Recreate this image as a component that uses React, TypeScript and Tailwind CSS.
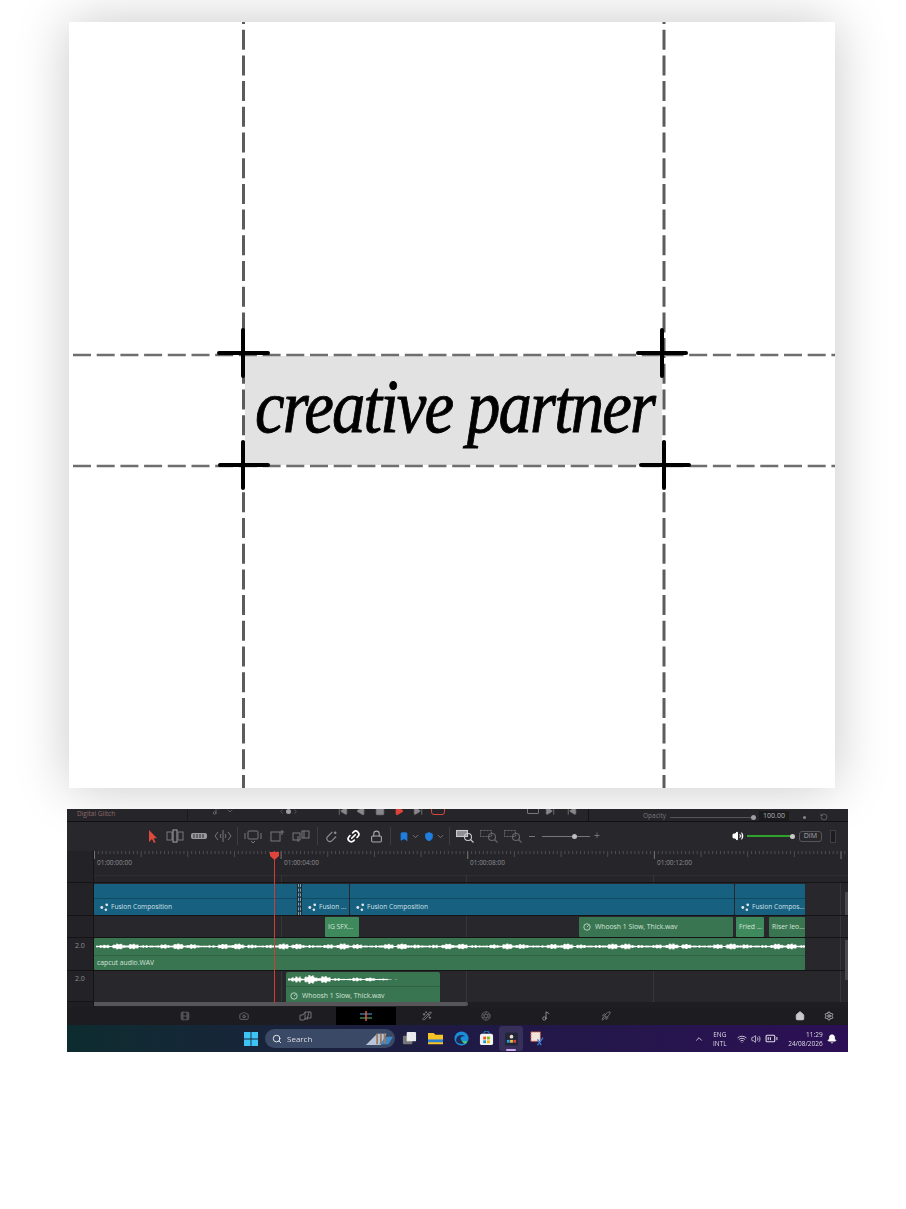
import { useMemo } from "react";
import {
  Aperture,
  BatteryMedium,
  Bell,
  Bookmark,
  Camera,
  ChevronDown,
  ChevronLeft,
  ChevronRight,
  ChevronUp,
  Film,
  Home,
  Link2,
  Lock,
  Music2,
  Play,
  Rocket,
  RotateCcw,
  Search,
  Settings,
  Shield,
  SkipBack,
  SkipForward,
  Square,
  Volume2,
  Wand2,
  Wifi,
} from "lucide-react";

const GUIDES_V = [243.5, 664];
const GUIDES_H = [355, 466];
const CROSSES = [
  { x: 243, y: 353, x1: 219, x2: 268 },
  { x: 662, y: 353, x1: 638, x2: 686 },
  { x: 243, y: 465, x1: 220, x2: 268 },
  { x: 664, y: 465, x1: 641, x2: 689 },
];

function Guides() {
  return (
    <svg className="absolute inset-0 w-full h-full" viewBox="69 22 766 766">
      <rect x="245" y="356" width="417" height="109" fill="#e2e2e2" />
      {GUIDES_V.map((x) => (
        <line key={x} x1={x} x2={x} y1="4" y2="788" stroke="#5c5c5c" strokeWidth="3" strokeDasharray="20 5.7" />
      ))}
      {GUIDES_H.map((y) => (
        <line key={y} x1="73" x2="835" y1={y} y2={y} stroke="#6e6e6e" strokeWidth="2.6" strokeDasharray="18 5.7" />
      ))}
      {CROSSES.map((c) => (
        <g key={c.x1 + "-" + c.y} stroke="#000" strokeWidth="4" strokeLinecap="round">
          <line x1={c.x1} x2={c.x2} y1={c.y} y2={c.y} />
          <line x1={c.x} x2={c.x} y1={c.y - 23} y2={c.y + 23} />
        </g>
      ))}
    </svg>
  );
}

function Canvas() {
  return (
    <div className="relative ml-[69px] w-[766px] h-[766px] bg-white shadow-[0_0_50px_rgba(0,0,0,0.22)] overflow-hidden">
      <div className="absolute inset-0 blur-[0.6px]">
        <Guides />
        <div className="absolute left-[186px] top-[336px] origin-left scale-x-[0.878] font-['Liberation_Serif',serif] italic text-[76px] leading-[96px] tracking-[-2.15px] text-black whitespace-nowrap [-webkit-text-stroke:0.9px_black]">
          creative partner
        </div>
      </div>
    </div>
  );
}

function Sep() {
  return <div className="w-px h-[18px] bg-[#3c3c41]" />;
}

function TrimIcon({ variant }: { variant: number }) {
  return (
    <svg viewBox="0 0 18 16" className="w-[18px] h-[16px] shrink-0" fill="none" stroke="#77777c" strokeWidth="1">
      {variant === 0 && (
        <>
          <rect x="1" y="4" width="5" height="8" />
          <rect x="7" y="2" width="4" height="12" stroke="#a5a5a8" />
          <rect x="12" y="4" width="5" height="8" />
        </>
      )}
      {variant === 1 && (
        <>
          <rect x="1" y="5" width="16" height="6" rx="2" fill="#9a9a9e" stroke="none" />
          <path d="M4 6v4M7 6v4M10 6v4M13 6v4" stroke="#2a2a2e" />
        </>
      )}
      {variant === 2 && <path d="M4 4 1 8l3 4M14 4l3 4-3 4M9 2v12M7 6 6 8l1 2M11 6l1 2-1 2" />}
      {variant === 3 && (
        <>
          <rect x="4" y="3" width="10" height="8" rx="1" />
          <path d="M1 5v6M17 5v6M7 13l2 2 2-2" />
        </>
      )}
      {variant === 4 && (
        <>
          <rect x="3" y="4" width="9" height="9" />
          <path d="M14 2v5M12 4h4" />
        </>
      )}
      {variant === 5 && (
        <>
          <rect x="1" y="5" width="7" height="7" />
          <rect x="10" y="3" width="7" height="7" />
          <path d="M6 14V8M12 10V3" />
        </>
      )}
    </svg>
  );
}

function ZoomIcon({ on }: { on?: boolean }) {
  const stroke = on ? "#c9c9cc" : "#67676c";
  return (
    <svg viewBox="0 0 18 14" className="w-[18px] h-[14px]" fill="none" stroke={stroke} strokeWidth="1.1">
      <rect
        x="0.5"
        y="1.5"
        width="11"
        height="6"
        fill={on ? "#8f8f93" : "none"}
        strokeDasharray={on ? undefined : "2 1"}
      />
      <circle cx="12" cy="8" r="3.5" />
      <path d="m14.5 10.5 3 3" />
    </svg>
  );
}

function Toolbar() {
  return (
    <div className="flex items-center h-[30px] bg-[#28282c] pl-[77px] pb-[1px] border-t border-[#111114]">
      <svg viewBox="0 0 16 16" className="w-[16px] h-[16px] shrink-0">
        <path d="M5 2v12l3-3 2 4 1.6-.8-2-3.9H13z" fill="#dd4a3c" />
      </svg>
      <div className="flex items-center gap-[6px] ml-[6px]">
        <TrimIcon variant={0} />
        <TrimIcon variant={1} />
        <TrimIcon variant={2} />
      </div>
      <div className="ml-[5px]"><Sep /></div>
      <div className="flex items-center gap-[6px] ml-[6px]">
        <TrimIcon variant={3} />
        <TrimIcon variant={4} />
        <TrimIcon variant={5} />
      </div>
      <div className="ml-[7px]"><Sep /></div>
      {/* snapping */}
      <svg viewBox="0 0 14 14" className="w-[13px] h-[13px] ml-[7px]" fill="none" stroke="#8d8d91" strokeWidth="1.2">
        <path d="M8 2 3 7a3 3 0 0 0 4.5 4.5L12 7" />
        <circle cx="11" cy="3" r="0.8" fill="#8d8d91" />
      </svg>
      <Link2 className="w-[15px] h-[15px] ml-[8px] text-white -rotate-45" strokeWidth={2.6} />
      <Lock className="w-[13px] h-[13px] ml-[9px] text-[#a9a9ad]" />
      <div className="ml-[7px]"><Sep /></div>
      <Bookmark className="w-[10px] h-[11px] ml-[8px] text-[#1f7fe0] fill-[#1f7fe0]" />
      <ChevronDown className="w-[9px] h-[9px] ml-[2px] text-[#8a8a8e]" />
      <Shield className="w-[10px] h-[11px] ml-[4px] text-[#1f7fe0] fill-[#1f7fe0]" />
      <ChevronDown className="w-[9px] h-[9px] ml-[2px] text-[#8a8a8e]" />
      <div className="ml-[4px]"><Sep /></div>
      <div className="flex items-center gap-[6px] ml-[6px]">
        <ZoomIcon on />
        <ZoomIcon />
        <ZoomIcon />
      </div>
      <span className="ml-[7px] w-[6px] h-px bg-[#77777b]" />
      <div className="relative ml-[7px] w-[48px] h-px bg-[#77777b]">
        <span className="absolute left-[30px] -top-[2px] w-[5px] h-[5px] rounded-full bg-[#bdbdc0]" />
      </div>
      <span className="ml-[4px] text-[10px] leading-none text-[#77777b] font-['Liberation_Sans',sans-serif]">+</span>
      <Volume2 className="w-[12px] h-[12px] ml-[132px] text-white fill-white" />
      <div className="relative ml-[3px] w-[46px] h-[2px] bg-[#30a02f]">
        <span className="absolute -right-[2px] -top-[1.5px] w-[5px] h-[5px] rounded-full bg-[#c8c8c8]" />
      </div>
      <div className="ml-[6px] w-[23px] h-[11px] rounded-[3px] border border-[#55555a] flex items-center justify-center text-[7px] text-[#a8a8ac] font-['Open_Sans',sans-serif]">
        DIM
      </div>
      <div className="ml-[8px] w-[6px] h-[13px] border border-[#3f3f44] bg-[#1d1d20]" />
    </div>
  );
}

function Ruler() {
  const ticks = useMemo(() => Array.from({ length: 194 }, (_, i) => i), []);
  return (
    <div className="flex h-[32px] bg-[#26262a]">
      <div className="w-[27px] bg-[#232327] border-r border-[#141416] border-b" />
      <div className="relative flex-1 border-b border-[#141416]">
        <svg className="absolute inset-0 w-full h-[9px]" viewBox="0 0 754 9">
          {ticks.map((i) => (
            <line
              key={i}
              x1={i * 3.888 + 0.5}
              x2={i * 3.888 + 0.5}
              y1="0"
              y2={i % 48 === 0 ? 8 : i % 12 === 0 ? 6 : 3}
              stroke={i % 48 === 0 ? "#77777b" : "#4e4e53"}
            />
          ))}
        </svg>
        <div className="flex pt-[7px] pl-[3px] text-[6.5px] text-[#8e8e92] font-['Open_Sans',sans-serif]">
          <span className="w-[187px]">01:00:00:00</span>
          <span className="w-[186px]">01:00:04:00</span>
          <span className="w-[187px]">01:00:08:00</span>
          <span>01:00:12:00</span>
        </div>
        <div className="absolute left-0 right-0 top-[24px] h-px bg-[#2e2e33]" />
        <div className="absolute left-[187px] top-[24px] bottom-0 w-px bg-[#333338]" />
        <div className="absolute left-[372px] top-[24px] bottom-0 w-px bg-[#333338]" />
        <div className="absolute left-[559px] top-[24px] bottom-0 w-px bg-[#333338]" />
      </div>
    </div>
  );
}

function FusionIcon() {
  return (
    <svg viewBox="0 0 10 10" className="w-[9px] h-[9px] shrink-0 fill-[#dfe9ee]">
      <circle cx="2" cy="5" r="1.6" />
      <circle cx="7.5" cy="2" r="1.5" />
      <circle cx="6.5" cy="7.5" r="1.4" />
    </svg>
  );
}

function BlueClip({ label, className }: { label?: string; className: string }) {
  return (
    <div className={`h-[31px] bg-[#17607f] rounded-[1px] flex flex-col overflow-hidden ${className}`}>
      <div className="h-[15px] border-b border-[#0f4a63]" />
      {label && (
        <div className="flex-1 flex items-center gap-[2px] pl-[6px] text-[6.6px] text-[#cfe0e7] whitespace-nowrap font-['Open_Sans',sans-serif]">
          <FusionIcon />
          {label}
        </div>
      )}
    </div>
  );
}

function GreenClip({ label, className, speed }: { label: string; className: string; speed?: boolean }) {
  return (
    <div className={`h-[20px] rounded-[1px] flex items-center gap-[4px] pl-[3px] text-[6.8px] text-[#d3e4d9] whitespace-nowrap overflow-hidden font-['Open_Sans',sans-serif] ${className}`}>
      {speed && (
        <svg viewBox="0 0 10 10" className="w-[8px] h-[8px] shrink-0 ml-[1px]" fill="none" stroke="#d3e4d9">
          <circle cx="5" cy="5" r="4" />
          <path d="m5 5 2-2" />
        </svg>
      )}
      {label}
    </div>
  );
}

// fake waveform, same bars every render
function Waveform({ width, height, amp, fade }: { width: number; height: number; amp: number; fade?: boolean }) {
  const path = useMemo(() => {
    let d = `M0 ${height / 2}H${fade ? width * 0.8 : width}`;
    for (let x = 0; x < width; x += 1) {
      const n = Math.abs(Math.sin(x * 0.21) * Math.sin(x * 0.057) + 0.25 * Math.sin(x * 1.7));
      const env = fade ? Math.max(0, 1 - x / width) : 1;
      const h = (0.4 + n * amp) * env;
      d += `M${x} ${(height / 2 - h).toFixed(1)}V${(height / 2 + h).toFixed(1)}`;
    }
    return d;
  }, [width, height, amp, fade]);
  return (
    <svg viewBox={`0 0 ${width} ${height}`} className="block" width={width} height={height}>
      <path d={path} stroke="#ffffff" strokeWidth="1.1" fill="none" />
    </svg>
  );
}

function TrackHead({ label, className }: { label?: string; className: string }) {
  return (
    <div className={`bg-[#232327] border-b border-[#141416] text-[7px] text-[#8c8c90] pl-[8px] pt-[3px] font-['Open_Sans',sans-serif] ${className}`}>
      {label}
    </div>
  );
}

function Timeline() {
  return (
    <div className="relative bg-[#28282c]">
      <Ruler />
      <div className="flex">
        <div className="w-[27px] flex flex-col border-r border-[#141416] shrink-0">
          <TrackHead className="h-[33px]" />
          <TrackHead className="h-[22px]" />
          <TrackHead label="2.0" className="h-[33px]" />
          <TrackHead label="2.0" className="h-[31px]" />
          <div className="h-[5px] bg-[#1f1f23]" />
        </div>
        <div className="relative flex-1 flex flex-col">
          {/* grid lines under the clips */}
          <div className="absolute left-[187px] top-0 bottom-[5px] w-px bg-[#36363b]" />
          <div className="absolute left-[372px] top-0 bottom-[5px] w-px bg-[#36363b]" />
          <div className="absolute left-[559px] top-0 bottom-[5px] w-px bg-[#36363b]" />
          <div className="absolute left-[746px] top-0 bottom-[5px] w-px bg-[#36363b]" />
          <div className="relative h-[33px] flex pt-[1px] border-b border-[#141416]">
            <BlueClip label="Fusion Composition" className="w-[203px]" />
            <div className="ml-[1px] w-[3px] h-[31px] bg-[#123f54] border-x border-dashed border-[#7f9fae]" />
            <BlueClip label="Fusion ..." className="ml-[1px] w-[47px]" />
            <BlueClip label="Fusion Composition" className="ml-[1px] w-[384px]" />
            <BlueClip label="Fusion Compos..." className="ml-[1px] w-[70px]" />
          </div>
          <div className="relative h-[22px] flex pt-[1px] border-b border-[#141416]">
            <GreenClip label="IG SFX..." className="ml-[231px] w-[34px] bg-[#3f8a5c]" />
            <GreenClip speed label="Whoosh 1  Slow, Thick.wav" className="ml-[220px] w-[154px] bg-[#3a7551]" />
            <GreenClip label="Fried ..." className="ml-[3px] w-[28px] bg-[#3f8a5c]" />
            <GreenClip label="Riser leo..." className="ml-[5px] w-[36px] bg-[#3a7551]" />
          </div>
          <div className="relative h-[33px] border-b border-[#141416]">
            <div className="w-[711px] h-[32px] bg-[#3a7551] flex flex-col rounded-[1px]">
              <div className="h-[18px] border-b border-[#2f6344] flex items-center pl-[2px]">
                <Waveform width={709} height={9} amp={2.2} />
              </div>
              <div className="flex-1 flex items-center pl-[3px] text-[6.8px] text-[#d3e4d9] font-['Open_Sans',sans-serif]">
                capcut audio.WAV
              </div>
            </div>
          </div>
          <div className="relative h-[31px] pt-[1px] overflow-hidden">
            <div className="ml-[192px] w-[154px] h-[30px] bg-[#3a7551] rounded-t-[2px] flex flex-col">
              <div className="h-[15px] border-b border-[#2f6344] flex items-center pl-[2px]">
                <Waveform width={120} height={11} amp={4.5} fade />
              </div>
              <div className="flex items-center gap-[4px] pl-[4px] pt-[4px] text-[6.8px] text-[#d3e4d9] font-['Open_Sans',sans-serif]">
                <svg viewBox="0 0 10 10" className="w-[8px] h-[8px]" fill="none" stroke="#d3e4d9">
                  <circle cx="5" cy="5" r="4" />
                  <path d="m5 5 2-2" />
                </svg>
                Whoosh 1  Slow, Thick.wav
              </div>
            </div>
          </div>
          <div className="relative h-[5px] bg-[#1f1f23] pb-[1px]">
            <div className="w-[374px] h-[4px] bg-[#55555a] rounded-r-[2px]" />
          </div>
        </div>
      </div>
      {/* vertical scroll thumbs */}
      <div className="absolute right-0 top-[41px] w-[3px] h-[23px] bg-[#4a4a4f]" />
      <div className="absolute right-0 top-[89px] w-[3px] h-[40px] bg-[#4a4a4f]" />
      {/* playhead */}
      <div className="absolute left-[207px] top-0 bottom-[4px] w-px bg-[#d13b30]" />
      <div className="absolute left-[203px] top-[1px] w-[9px] h-[8px] bg-[#e0443a] [clip-path:polygon(0_0,100%_0,100%_50%,50%_100%,0_50%)]" />
    </div>
  );
}

function PageNav() {
  const cls = "w-[10px] h-[10px]";
  return (
    <div className="h-[18px] bg-[#1d1d21] flex items-center">
      <Film className={`${cls} ml-[113px] text-[#636368]`} />
      <Camera className={`${cls} ml-[49px] text-[#717176]`} />
      <svg viewBox="0 0 14 10" className="w-[14px] h-[10px] ml-[50px]" fill="none" stroke="#717176">
        <path d="M1 4h3l2-3h6v6H7l-2 2H1zM6 1v8M10 1 8 9" />
      </svg>
      <div className="ml-[23px] w-[60px] h-[18px] bg-black flex items-center justify-center">
        <svg viewBox="0 0 14 10" className="w-[14px] h-[10px]">
          <path d="M1 3h12" stroke="#5aa6e0" />
          <path d="M1 7h12" stroke="#5fc06a" />
          <path d="M7 0v10" stroke="#e05a4a" strokeWidth="1.5" />
        </svg>
      </div>
      <Wand2 className={`${cls} ml-[26px] text-[#8a8a8e]`} />
      <Aperture className={`${cls} ml-[49px] text-[#636368]`} />
      <Music2 className={`${cls} ml-[50px] text-[#9c9ca0]`} />
      <Rocket className={`${cls} ml-[50px] text-[#77777b]`} />
      <Home className={`${cls} ml-[184px] text-[#c9c9cc] fill-[#c9c9cc]`} />
      <Settings className={`${cls} ml-[19px] text-[#c9c9cc]`} />
    </div>
  );
}

function WinLogo() {
  return (
    <svg viewBox="0 0 16 16" className="w-[14px] h-[14px] shrink-0">
      <path d="M0 0h7.5v7.5H0zM8.5 0H16v7.5H8.5zM0 8.5h7.5V16H0zM8.5 8.5H16V16H8.5z" fill="#3ec3f5" />
    </svg>
  );
}

function TaskIcons() {
  return (
    <div className="flex items-center">
      {/* task view */}
      <svg viewBox="0 0 16 16" className="w-[15px] h-[15px] ml-[7px]">
        <rect x="1" y="5" width="10" height="9" rx="1" fill="#777" />
        <rect x="5" y="1" width="10" height="10" rx="1" fill="#e9e9ee" />
      </svg>
      {/* explorer */}
      <svg viewBox="0 0 16 16" className="w-[15px] h-[15px] ml-[11px]">
        <path d="M0 2h6l2 2h8v10H0z" fill="#f7c325" />
        <rect x="0" y="9" width="16" height="3" fill="#2d7fd0" />
      </svg>
      {/* edge */}
      <svg viewBox="0 0 16 16" className="w-[15px] h-[15px] ml-[11px]">
        <circle cx="8" cy="8" r="7.5" fill="#1a8ed6" />
        <path d="M3 12c4 3 9 2 11-2-3 2-7 1-7-2 0-2 3-3 5-2-1-2-7-3-9 1-1 2-1 4 0 5z" fill="#1e2a5a" />
        <path d="M8 9c1 2 4 2 6 1l-1 3c-2 1-4 0-5-4z" fill="#43d07c" />
      </svg>
      {/* store */}
      <svg viewBox="0 0 16 16" className="w-[15px] h-[15px] ml-[10px]">
        <rect x="1" y="3" width="14" height="12" rx="2" fill="#f2f2f2" />
        <path d="M5 3a3 3 0 0 1 6 0" fill="none" stroke="#1c9ad6" />
        <rect x="4.5" y="6" width="3" height="3" fill="#e8562a" />
        <rect x="8.5" y="6" width="3" height="3" fill="#7fba00" />
        <rect x="4.5" y="10" width="3" height="3" fill="#1c9ad6" />
        <rect x="8.5" y="10" width="3" height="3" fill="#f5b900" />
      </svg>
      {/* resolve, active app */}
      <div className="relative ml-[5px] w-[24px] h-[25px] bg-white/10 rounded-[3px] flex items-center justify-center">
        <svg viewBox="0 0 14 14" className="w-[13px] h-[14px]">
          <rect width="14" height="14" rx="2" fill="#20253a" />
          <circle cx="7" cy="4.5" r="2" fill="#f0d9c8" />
          <rect x="2" y="8" width="3" height="3" fill="#2f9ed8" />
          <rect x="5.5" y="8" width="3" height="3" fill="#e6c34a" />
          <rect x="9" y="8" width="3" height="3" fill="#d5443b" />
        </svg>
        <span className="absolute bottom-0 left-[7px] w-[10px] h-[2px] rounded-full bg-[#c9a4ea]" />
      </div>
      {/* snipping */}
      <svg viewBox="0 0 16 16" className="w-[15px] h-[15px] ml-[7px]">
        <rect x="1" y="1" width="10" height="10" fill="#f0e4de" stroke="#d9593c" strokeDasharray="2 1" />
        <path d="m14 7-6 8M8 9l4 6" stroke="#3a7bd5" strokeWidth="1.4" />
      </svg>
    </div>
  );
}

function Taskbar() {
  return (
    <div className="h-[27px] flex items-center bg-gradient-to-r from-[#0d2c2f] via-[#1f1a45] via-50% to-[#2c0f55] font-['Open_Sans',sans-serif] text-[#dcdce4]">
      <div className="ml-[177px]"><WinLogo /></div>
      <div className="relative ml-[7px] w-[130px] h-[19px] rounded-full bg-[#3a4a66] flex items-center pl-[7px] text-[8px] overflow-hidden">
        <Search className="w-[10px] h-[10px] mr-[5px] text-white" />
        Search
        <svg viewBox="0 0 32 16" className="absolute right-[1px] top-[2px] w-[30px] h-[15px]">
          <path d="M2 15 14 3h10l-6 12z" fill="#b7c4d9" />
          <path d="M16 14 24 6h7l-5 8z" fill="#3f86c4" />
          <path d="M14 3v11M18 3v10M22 3v10" stroke="#9a7c62" strokeWidth="2" />
        </svg>
      </div>
      <TaskIcons />
      <ChevronUp className="w-[10px] h-[10px] ml-[149px] text-[#dcdce4]" />
      <div className="ml-[9px] text-[6.5px] leading-[9px] text-center">
        <div>ENG</div>
        <div>INTL</div>
      </div>
      <Wifi className="w-[10px] h-[10px] ml-[10px]" />
      <Volume2 className="w-[10px] h-[10px] ml-[4px]" />
      <BatteryMedium className="w-[13px] h-[13px] ml-[4px]" />
      <div className="ml-[7px] w-[38px] text-[6.5px] leading-[9px] text-right">
        <div>11:29</div>
        <div>24/08/2026</div>
      </div>
      <Bell className="w-[10px] h-[10px] ml-[4px] text-white fill-white" />
    </div>
  );
}

function TopStrip() {
  const icon = "w-[10px] h-[10px] -mt-[3px] shrink-0";
  return (
    <div className="h-[12px] bg-[#26262a] flex items-start overflow-hidden text-[#77777b]">
      <span className="ml-[10px] w-[110px] text-[6.5px] leading-[10px] text-[#8f6a6a] font-['Open_Sans',sans-serif]">Digital Glitch</span>
      <div className="w-px h-[12px] bg-[#1a1a1d]" />
      <Music2 className="ml-[24px] w-[8px] h-[8px] -mt-[2px]" />
      <ChevronDown className="ml-[6px] w-[8px] h-[8px] -mt-[2px]" />
      <ChevronLeft className="ml-[44px] w-[7px] h-[7px] -mt-[1px]" />
      <span className="ml-[1px] w-[5px] h-[5px] rounded-full bg-[#a0a0a4]" />
      <ChevronRight className="ml-[1px] w-[7px] h-[7px] -mt-[1px]" />
      <SkipBack className={`ml-[39px] ${icon} fill-[#88888c]`} />
      <Play className={`ml-[8px] ${icon} rotate-180 fill-[#88888c]`} />
      <Square className={`ml-[9px] ${icon} fill-[#88888c]`} />
      <Play className={`ml-[9px] ${icon} text-[#e0443a] fill-[#e0443a]`} />
      <SkipForward className={`ml-[9px] ${icon} fill-[#88888c]`} />
      <div className="ml-[8px] -mt-[4px] w-[14px] h-[10px] rounded-[3px] border border-[#d0493c]" />
      <div className="ml-[82px] -mt-[3px] w-[12px] h-[8px] rounded-[1px] border border-[#77777b]" />
      <SkipForward className={`ml-[6px] ${icon} fill-[#88888c]`} />
      <SkipBack className={`ml-[12px] ${icon} fill-[#88888c]`} />
      <div className="ml-[11px] w-px h-[12px] bg-[#141416]" />
      <span className="ml-[54px] mt-[2px] text-[6.5px] leading-[10px] font-['Open_Sans',sans-serif]">Opacity</span>
      <div className="ml-[4px] mt-[8px] w-[81px] h-px bg-[#55555a]" />
      <span className="mt-[6px] w-[5px] h-[5px] rounded-full bg-[#a0a0a4]" />
      <span className="ml-[3px] mt-[2px] w-[30px] h-[10px] text-center bg-[#1b1b1e] text-[7px] leading-[10px] text-[#b5b5b8] font-['Open_Sans',sans-serif]">100.00</span>
      <span className="ml-[14px] mt-[7px] w-[3px] h-[3px] rounded-full bg-[#88888c]" />
      <RotateCcw className="ml-[14px] mt-[4px] w-[8px] h-[8px]" />
    </div>
  );
}

function Resolve() {
  return (
    <div className="ml-[67px] mt-[21px] w-[781px] h-[243px] overflow-hidden blur-[0.4px]">
      <TopStrip />
      <Toolbar />
      <Timeline />
      <PageNav />
      <Taskbar />
    </div>
  );
}

export default function App() {
  return (
    <div className="min-h-[1209px] bg-white pt-[22px]">
      <Canvas />
      <Resolve />
    </div>
  );
}
